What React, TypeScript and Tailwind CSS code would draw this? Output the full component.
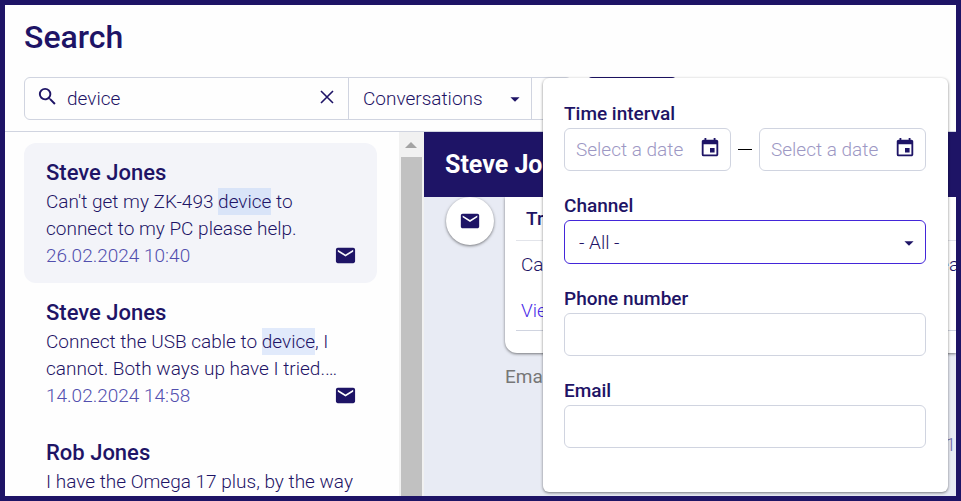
import { ReactNode } from 'react';
import { MdArrowDropDown, MdEmail, MdEvent, MdSearch } from 'react-icons/md';

interface Result {
  id: number;
  name: string;
  text: ReactNode;
  date: string;
  selected?: boolean;
}

const RESULTS: Result[] = [
  {
    id: 1,
    name: 'Steve Jones',
    text: <>Can't get my ZK-493 <mark className="inline-block bg-[#d9e4f8] text-inherit">device</mark> to connect to my PC please help.</>,
    date: '26.02.2024 10:40',
    selected: true,
  },
  {
    id: 2,
    name: 'Steve Jones',
    text: <>Connect the USB cable to <mark className="inline-block bg-[#e1eafb] text-inherit">device</mark>, I cannot. Both ways up have I tried.…</>,
    date: '14.02.2024 14:58',
  },
  {
    id: 3,
    name: 'Rob Jones',
    text: <>I have the Omega 17 plus, by the way</>,
    date: '09.02.2024 09:12',
  },
];

const LABEL = 'block pb-px font-medium';
const FIELD = 'block h-[43px] w-full rounded-md border border-[#d0d4e0] bg-white px-3 outline-none';

function ResultItem({ result }: { result: Result }) {
  return (
    <li className={result.selected ? 'rounded-xl bg-[#f3f4f9] px-[22px] py-[14px]' : 'px-[22px] py-[14px]'}>
      <h2 className="text-[22px] leading-[31px] font-medium">{result.name}</h2>
      <p>{result.text}</p>
      <div className="flex items-center justify-between">
        <time className="text-[#524fae]">{result.date}</time>
        <MdEmail size={23} className="-mr-0.5" />
      </div>
    </li>
  );
}

function DateField({ label }: { label: string }) {
  return (
    <div className="flex h-[43px] min-w-0 flex-1 items-center rounded-md border border-[#d0d4e0] pr-[9px] pl-[11px]">
      <input
        type="text"
        aria-label={label}
        placeholder="Select a date"
        className="w-full min-w-0 flex-1 outline-none placeholder:text-[#9d98c4]"
      />
      <button type="button" aria-label={`Open calendar, ${label}`} className="pb-1">
        <MdEvent size={22} />
      </button>
    </div>
  );
}

function FilterPanel() {
  return (
    <form className="absolute top-[73px] right-2 z-10 flex w-[405px] flex-col gap-[21px] rounded-md bg-white pt-[22px] pr-[22px] pb-[44px] pl-[21px] shadow-[0_1px_3px_rgba(0,0,0,0.5)]">
      <fieldset className="min-w-0">
        <legend className={LABEL}>Time interval</legend>
        <div className="flex items-center gap-[7px]">
          <DateField label="From" />
          <span className="h-px w-[14px] bg-black" />
          <DateField label="To" />
        </div>
      </fieldset>
      <div>
        <label htmlFor="channel" className={LABEL}>Channel</label>
        <div className="relative">
          <select id="channel" className="block h-11 w-full appearance-none rounded-md border border-[#4326d9] bg-white px-[14px] outline-none">
            <option>- All -</option>
          </select>
          <MdArrowDropDown size={22} className="pointer-events-none absolute top-3 right-[6px]" />
        </div>
      </div>
      <div>
        <label htmlFor="phone" className={LABEL}>Phone number</label>
        <input id="phone" type="tel" className={FIELD} />
      </div>
      <div>
        <label htmlFor="email" className={LABEL}>Email</label>
        <input id="email" type="email" className={FIELD} />
      </div>
    </form>
  );
}

export default function App() {
  return (
    <div className="relative flex h-screen flex-col overflow-hidden border-[5px] border-[#1e1466] bg-[#fefefe] font-[Roboto,sans-serif] text-[19px] leading-[27px] font-light text-[#1e1466]">
      <header className="border-b border-[#d0d4e0] px-[19px] pt-3 pb-[11px]">
        <h1 className="text-[32px] leading-10 font-medium">Search</h1>
        <div className="mt-5 flex gap-4">
          <div className="flex h-[43px] w-[548px] rounded-md border border-[#d0d4e0]">
            <div className="flex w-[323px] items-center pr-[13px] pl-[11px]">
              <MdSearch size={23} className="mb-1" />
              <input type="text" aria-label="Search" defaultValue="device" className="ml-2 min-w-0 flex-1 outline-none" />
              <button type="button" aria-label="Clear" className="mb-1">
                <svg width="16" height="16" viewBox="0 0 16 16" fill="none" stroke="currentColor" strokeWidth="1.6">
                  <path d="M2 2l12 12M14 2L2 14" />
                </svg>
              </button>
            </div>
            <div className="relative w-[184px] border-x border-[#d0d4e0]">
              <select aria-label="Search in" className="h-full w-full appearance-none px-[14px] outline-none">
                <option>Conversations</option>
              </select>
              <MdArrowDropDown size={22} className="pointer-events-none absolute top-[10px] right-[5px]" />
            </div>
            <button type="button" aria-label="Filters" className="flex-1" />
          </div>
          <button type="button" aria-label="Run search" className="w-[88px] rounded-sm bg-[#1e1466]" />
        </div>
      </header>

      <div className="flex min-h-0 flex-1">
        <ul className="w-[394px] shrink-0 overflow-hidden pt-[11px] pr-[22px] pl-[19px]">
          {RESULTS.map((result) => <ResultItem key={result.id} result={result} />)}
        </ul>

        {/* Scrollbar */}
        <div className="flex w-[25px] shrink-0 flex-col items-center bg-[#f1f1f1] pr-px">
          <div className="flex h-[25px] items-center">
            <svg width="12" height="6" viewBox="0 0 12 6" fill="#a3a3a3"><path d="M6 0l6 6H0z" /></svg>
          </div>
          <div className="w-[21px] flex-1 bg-[#c1c1c1]" />
        </div>

        <main className="flex min-w-0 flex-1 flex-col bg-[#e8ebf4]">
          <h2 className="bg-[#1e1466] px-[21px] py-[19px] text-[25px] leading-[27px] font-bold text-white">Steve Jones</h2>
          <div className="flex gap-[11px] overflow-hidden pl-[22px]">
            <div className="flex size-12 shrink-0 items-center justify-center rounded-full bg-white shadow-[0_1px_3px_rgba(0,0,0,0.5)]">
              <MdEmail size={22} />
            </div>
            <div className="min-w-0 flex-1">
              <article className="rounded-bl-xl bg-white pb-[22px] pl-[11px] whitespace-nowrap shadow-[0_1px_3px_rgba(0,0,0,0.5)]">
                <h3 className="border-b border-[#e2e4ea] px-[10px] pt-2 pb-2 font-medium">Trouble connecting</h3>
                <div className="border-b border-[#d0d4e0] px-[5px] pt-[10px] pb-[6px]">
                  <p>Can't get my ZK-493 device to connect to my PC please help.</p>
                  <a href="#" className="mt-[19px] block text-[#4a2de8]">View full message</a>
                </div>
              </article>
              <p className="mt-[10px] font-normal text-[#777]">Email</p>
              <p className="mt-[41px] text-right whitespace-nowrap text-[#6f6aa8]">26.02.2024 1</p>
            </div>
          </div>
        </main>
      </div>

      <FilterPanel />
    </div>
  );
}
